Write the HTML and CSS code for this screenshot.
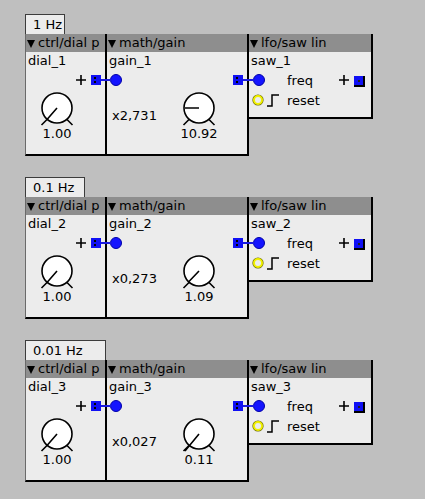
FILE: index.html
```html
<!DOCTYPE html>
<html>
<head>
<meta charset="utf-8">
<link rel="stylesheet" href="styles.css">
</head>
<body>

<div class="group">
  <div class="label w1">1 Hz</div>
  <div class="panels">
    <div class="panel dial">
      <div class="hdr"><span class="tri"></span>ctrl/dial p</div>
      <div class="name">dial_1</div>
      <div class="prow end">
        <svg class="plus" width="10" height="10" viewBox="0 0 10 10"><path d="M5 0V10M0 5H10"/></svg>
        <span class="sq out"></span>
      </div>
      <div class="kcol dk">
        <svg class="knob" width="40" height="36" viewBox="0 0 40 36"><circle cx="20" cy="18" r="15"/><path d="M10 29.5L4.5 35M30 29.5L35.5 35M20 18L10 29.5"/></svg>
        <div class="val">1.00</div>
      </div>
    </div>
    <div class="panel gain">
      <div class="hdr"><span class="tri"></span>math/gain</div>
      <div class="name">gain_1</div>
      <div class="prow between">
        <span class="dot"></span>
        <span class="sq out"></span>
      </div>
      <div class="gbody">
        <span class="mult">x2,731</span>
        <div class="kcol gk">
          <svg class="knob" width="40" height="36" viewBox="0 0 40 36"><circle cx="20" cy="18" r="15"/><path d="M10 29.5L4.5 35M30 29.5L35.5 35M20 18H6"/></svg>
          <div class="val">10.92</div>
        </div>
      </div>
    </div>
    <div class="panel saw">
      <div class="hdr"><span class="tri"></span>lfo/saw lin</div>
      <div class="name">saw_1</div>
      <div class="srow">
        <div class="lead"><span class="dot"></span></div>
        <span class="stext">freq</span>
        <span class="spacer"></span>
        <svg class="plus" width="10" height="10" viewBox="0 0 10 10"><path d="M5 0V10M0 5H10"/></svg>
        <span class="sq small"></span>
      </div>
      <div class="srow">
        <div class="lead"><span class="ring"></span><svg class="step" width="12" height="13" viewBox="0 0 12 13"><polyline points="0,12 5,12 5,1 12,1"/></svg></div>
        <span class="stext">reset</span>
      </div>
    </div>
  </div>
</div>

<div class="group">
  <div class="label w2">0.1 Hz</div>
  <div class="panels">
    <div class="panel dial">
      <div class="hdr"><span class="tri"></span>ctrl/dial p</div>
      <div class="name">dial_2</div>
      <div class="prow end">
        <svg class="plus" width="10" height="10" viewBox="0 0 10 10"><path d="M5 0V10M0 5H10"/></svg>
        <span class="sq out"></span>
      </div>
      <div class="kcol dk">
        <svg class="knob" width="40" height="36" viewBox="0 0 40 36"><circle cx="20" cy="18" r="15"/><path d="M10 29.5L4.5 35M30 29.5L35.5 35M20 18L10 29.5"/></svg>
        <div class="val">1.00</div>
      </div>
    </div>
    <div class="panel gain">
      <div class="hdr"><span class="tri"></span>math/gain</div>
      <div class="name">gain_2</div>
      <div class="prow between">
        <span class="dot"></span>
        <span class="sq out"></span>
      </div>
      <div class="gbody">
        <span class="mult">x0,273</span>
        <div class="kcol gk">
          <svg class="knob" width="40" height="36" viewBox="0 0 40 36"><circle cx="20" cy="18" r="15"/><path d="M10 29.5L4.5 35M30 29.5L35.5 35M20 18L9.5 29"/></svg>
          <div class="val">1.09</div>
        </div>
      </div>
    </div>
    <div class="panel saw">
      <div class="hdr"><span class="tri"></span>lfo/saw lin</div>
      <div class="name">saw_2</div>
      <div class="srow">
        <div class="lead"><span class="dot"></span></div>
        <span class="stext">freq</span>
        <span class="spacer"></span>
        <svg class="plus" width="10" height="10" viewBox="0 0 10 10"><path d="M5 0V10M0 5H10"/></svg>
        <span class="sq small"></span>
      </div>
      <div class="srow">
        <div class="lead"><span class="ring"></span><svg class="step" width="12" height="13" viewBox="0 0 12 13"><polyline points="0,12 5,12 5,1 12,1"/></svg></div>
        <span class="stext">reset</span>
      </div>
    </div>
  </div>
</div>

<div class="group">
  <div class="label w3">0.01 Hz</div>
  <div class="panels">
    <div class="panel dial">
      <div class="hdr"><span class="tri"></span>ctrl/dial p</div>
      <div class="name">dial_3</div>
      <div class="prow end">
        <svg class="plus" width="10" height="10" viewBox="0 0 10 10"><path d="M5 0V10M0 5H10"/></svg>
        <span class="sq out"></span>
      </div>
      <div class="kcol dk">
        <svg class="knob" width="40" height="36" viewBox="0 0 40 36"><circle cx="20" cy="18" r="15"/><path d="M10 29.5L4.5 35M30 29.5L35.5 35M20 18L10 29.5"/></svg>
        <div class="val">1.00</div>
      </div>
    </div>
    <div class="panel gain">
      <div class="hdr"><span class="tri"></span>math/gain</div>
      <div class="name">gain_3</div>
      <div class="prow between">
        <span class="dot"></span>
        <span class="sq out"></span>
      </div>
      <div class="gbody">
        <span class="mult">x0,027</span>
        <div class="kcol gk">
          <svg class="knob" width="40" height="36" viewBox="0 0 40 36"><circle cx="20" cy="18" r="15"/><path d="M10 29.5L4.5 35M30 29.5L35.5 35M20 18L6 35"/></svg>
          <div class="val">0.11</div>
        </div>
      </div>
    </div>
    <div class="panel saw">
      <div class="hdr"><span class="tri"></span>lfo/saw lin</div>
      <div class="name">saw_3</div>
      <div class="srow">
        <div class="lead"><span class="dot"></span></div>
        <span class="stext">freq</span>
        <span class="spacer"></span>
        <svg class="plus" width="10" height="10" viewBox="0 0 10 10"><path d="M5 0V10M0 5H10"/></svg>
        <span class="sq small"></span>
      </div>
      <div class="srow">
        <div class="lead"><span class="ring"></span><svg class="step" width="12" height="13" viewBox="0 0 12 13"><polyline points="0,12 5,12 5,1 12,1"/></svg></div>
        <span class="stext">reset</span>
      </div>
    </div>
  </div>
</div>

</body>
</html>
```
FILE: styles.css
```css
html, body {
  margin: 0;
  background: #bfbfbf;
}
body {
  padding: 14px 0 0 25px;
  font-family: "DejaVu Sans", "Bitstream Vera Sans", sans-serif;
  font-size: 13px;
  color: #000;
}
.group {
  margin-bottom: 21px;
}
.label {
  box-sizing: border-box;
  height: 20px;
  border: 1px solid #3c3c3c;
  border-bottom: none;
  background: #ececec;
  padding-left: 7px;
  line-height: 19px;
  white-space: nowrap;
}
.w1 { width: 40px; }
.w2 { width: 60px; }
.w3 { width: 81px; }

.panels {
  display: flex;
  align-items: flex-start;
}
.panel {
  background: #ececec;
  border-right: 2px solid #000;
  border-bottom: 2px solid #000;
}
.dial {
  width: 79px;
  height: 120px;
  border-left: 1px solid #6a6a6a;
}
.gain {
  width: 140px;
  height: 120px;
}
.saw {
  width: 122px;
  height: 83px;
}
.hdr {
  height: 18px;
  line-height: 18px;
  background: #8e8e8e;
  padding-left: 1px;
  white-space: nowrap;
  overflow: hidden;
}
.tri {
  display: inline-block;
  width: 0;
  height: 0;
  border-left: 4px solid transparent;
  border-right: 4px solid transparent;
  border-top: 8px solid #000;
  margin-right: 3px;
  vertical-align: -1px;
}
.name {
  height: 18px;
  line-height: 18px;
  padding-left: 2px;
}
.prow {
  height: 20px;
  display: flex;
  align-items: center;
}
.prow.end {
  justify-content: flex-end;
  padding-right: 4px;
}
.prow.between {
  justify-content: space-between;
  padding: 0 4px 0 3px;
}
.plus {
  stroke: #000;
  stroke-width: 1.6;
  fill: none;
  margin-right: 5px;
}
.sq {
  position: relative;
  display: block;
  width: 10px;
  height: 10px;
  background: #1010f4;
}
.sq.out::before {
  content: "";
  position: absolute;
  left: 3px;
  top: 2px;
  width: 2px;
  height: 2px;
  background: #000;
  box-shadow: 0 4px 0 #000;
}
.sq.out::after {
  content: "";
  position: absolute;
  left: 100%;
  top: 4px;
  width: 11px;
  height: 2px;
  background: #1a1ae0;
}
.sq.small {
  width: 9px;
  height: 9px;
  box-shadow: 1px 1px 0 1px #000;
  margin-right: 1px;
}
.sq.small::before {
  content: "";
  position: absolute;
  left: 4px;
  top: 4px;
  width: 2px;
  height: 2px;
  background: #222;
}
.dot {
  display: block;
  box-sizing: border-box;
  width: 12px;
  height: 12px;
  border-radius: 50%;
  background: #1414ff;
  border: 1px solid #0000a8;
}
.kcol {
  width: 40px;
  display: flex;
  flex-direction: column;
  align-items: center;
}
.dk {
  margin-left: 11px;
}
.knob {
  display: block;
  fill: #fff;
  stroke: #000;
  stroke-width: 1.6;
}
.knob path {
  fill: none;
}
.val {
  line-height: 15px;
  white-space: nowrap;
}
.gbody {
  display: flex;
  align-items: center;
  padding-left: 5px;
}
.mult {
  flex: 1;
}
.gk {
  margin-right: 28px;
}
.srow {
  height: 20px;
  display: flex;
  align-items: center;
  padding: 0 7px 0 4px;
}
.lead {
  width: 34px;
  display: flex;
  align-items: center;
}
.ring {
  display: block;
  box-sizing: border-box;
  width: 10px;
  height: 10px;
  border-radius: 50%;
  border: 2.5px solid #f0f000;
  background: #ececec;
  box-shadow: 0 0 0 0.6px #6a6a00;
}
.step {
  margin-left: 4px;
  fill: none;
  stroke: #000;
  stroke-width: 1.5;
}
.spacer {
  flex: 1;
}
```
